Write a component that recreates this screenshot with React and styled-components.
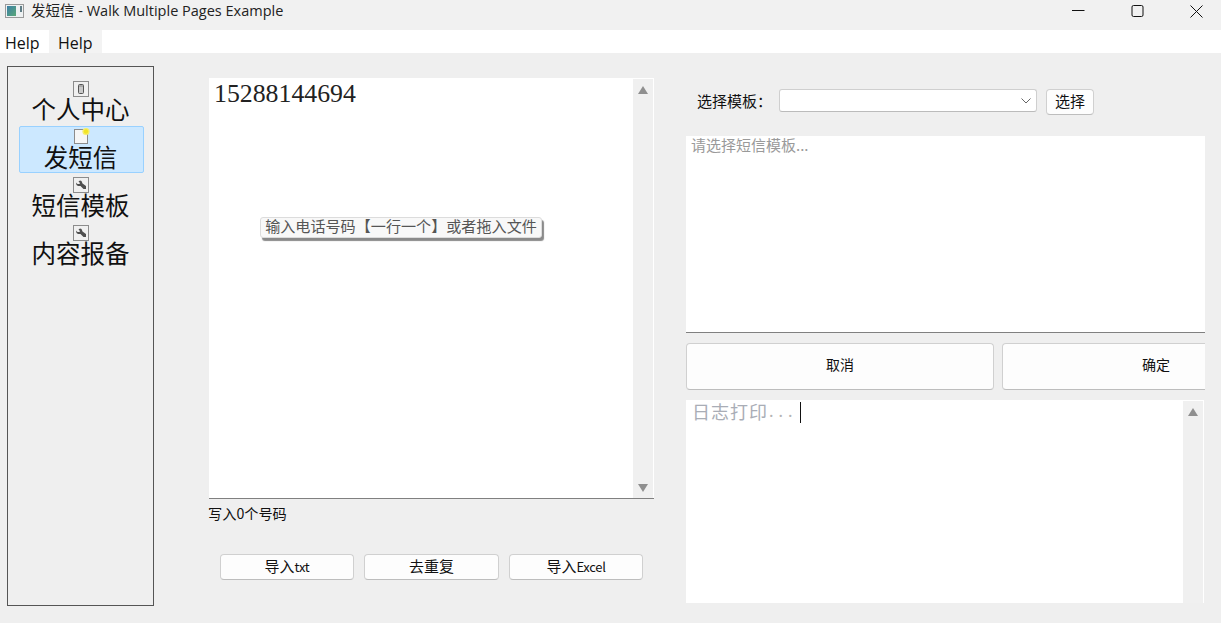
import React from "react";
import styled, { createGlobalStyle } from "styled-components";

const Global = createGlobalStyle`
  html, body { margin: 0; padding: 0; background: #efefef; overflow: hidden; }
  body { font-family: "Noto Sans CJK SC", "Liberation Sans", sans-serif; color: #000; }
`;
const Window = styled.div`width:1221px;height:623px;display:flex;flex-direction:column;overflow:hidden;background:#efefef;`;
const TitleBar = styled.div`height:30px;flex:none;background:#f1f1f1;display:flex;align-items:center;padding-left:5px;`;
const Title = styled.div`margin-left:6px;margin-top:-8px;font:14.5px/20px "Open Sans","Noto Sans CJK SC",sans-serif;color:#222;flex:1;white-space:nowrap;`;
const WinIcon = styled.svg`width:20px;height:16px;margin-top:-8px;flex:none;`;
const Controls = styled.div`display:flex;margin-top:-7px;margin-right:18px;gap:46px;`;
const Ctl = styled.svg`width:13px;height:13px;display:block;`;
const MenuBar = styled.div`height:23px;flex:none;background:#fff;display:flex;`;
const MenuItem = styled.div`width:${p=>p.$hi?"53px":"48px"};padding-left:${p=>p.$hi?"9px":"5px"};box-sizing:border-box;margin-left:${p=>p.$hi?"1px":"0"};background:${p=>p.$hi?"#f3f3f3":"transparent"};font:16px/26px "Open Sans",sans-serif;color:#111;`;
const Body = styled.div`flex:1;display:flex;align-items:flex-start;padding:13px 0 0 7px;`;
const Nav = styled.nav`width:147px;height:540px;box-sizing:border-box;border:1px solid #555;padding:11px 9px 0 11px;flex:none;display:flex;flex-direction:column;`;
const NavItem = styled.div`height:47px;margin-bottom:1px;box-sizing:border-box;display:flex;flex-direction:column;align-items:center;justify-content:flex-start;padding:2px 2px 0 0;border:1px solid ${p=>p.$on?"#99d1ff":"transparent"};border-radius:2px;background:${p=>p.$on?"#cce8ff":"transparent"};`;
const NavIcon = styled.svg`width:16px;height:16px;flex:none;display:block;overflow:visible;`;
const NavLabel = styled.div`font-size:24.5px;line-height:26px;margin-top:-1px;color:#111;white-space:nowrap;`;
const Middle = styled.div`width:445px;margin-left:55px;margin-top:12px;flex:none;position:relative;display:flex;flex-direction:column;`;
const Numbers = styled.div`height:420px;background:#fff;border-bottom:1px solid #808080;display:flex;`;
const NumberText = styled.div`flex:1;padding:1px 5px 0 5px;font:25.8px/29px "Liberation Serif",serif;color:#222;`;
const Bar = styled.div`width:${p=>p.$w||20}px;flex:none;background:#f0f0f0;display:flex;flex-direction:column;justify-content:space-between;align-items:center;padding:7px 1px 6px 0;margin-top:1px;box-sizing:border-box;`;
const NumberEdge = styled.div`width:1px;flex:none;background:#fff;`;
const Arrow = styled.div`width:0;height:0;border-left:5px solid transparent;border-right:5px solid transparent;${p=>p.$down?"border-top:8px solid #8f8f8f;":"border-bottom:8px solid #8f8f8f;"}`;
const Tip = styled.div`position:absolute;left:51px;top:139px;width:282px;height:21px;box-sizing:border-box;border:1px solid #dcdcdc;border-radius:3px;background:#f8f8f8;box-shadow:2px 3px 1px #8a8a8a;font-size:15.1px;line-height:14px;color:#555;text-align:center;white-space:nowrap;`;
const Count = styled.div`font-size:14.2px;line-height:20px;margin-top:4px;margin-left:-1px;margin-bottom:1px;color:#111;`;
const ButtonRow = styled.div`display:flex;gap:10px;padding-left:11px;margin-top:30px;`;
const Btn = styled.div`width:${p=>p.$w}px;height:${p=>p.$h||26}px;flex:none;box-sizing:border-box;border:1px solid #d0d0d0;border-bottom-color:#bdbdbd;border-radius:4px;background:#fdfdfd;display:flex;align-items:center;justify-content:center;font-size:${p=>p.$fs||15}px;color:#111;padding-bottom:${p=>p.$pb||3}px;`;
const Latin = styled.span`font-size:13px;letter-spacing:-.3px;margin-top:1px;`;
const Right = styled.div`width:519px;margin-left:32px;flex:none;overflow:hidden;display:flex;flex-direction:column;padding-top:23px;height:537px;`;
const PickRow = styled.div`display:flex;align-items:flex-start;height:47px;`;
const PickLabel = styled.div`width:93px;padding-left:11px;box-sizing:border-box;font-size:15px;line-height:24px;color:#111;white-space:nowrap;`;
const Select = styled.div`width:258px;height:23px;box-sizing:border-box;border:1px solid #cfcfcf;border-bottom-color:#bbb;border-radius:3px;background:#fff;display:flex;justify-content:flex-end;align-items:center;padding-right:5px;`;
const Chevron = styled.svg`width:10px;height:6px;`;
const PickButton = styled(Btn)`margin-left:9px;`;
const TemplateBox = styled.div`height:196px;background:#fff;border-bottom:1px solid #808080;padding:0 5px;font-size:15px;line-height:18px;color:#9a9a9a;`;
const BigRow = styled.div`display:flex;gap:8px;margin-top:10px;`;
const LogBox = styled.div`height:203px;margin:10px 1px 0 0;background:#fff;display:flex;padding-right:1px;`;
const LogText = styled.div`flex:1;padding:0 6px;font-size:18px;line-height:23px;color:#a9adb6;display:flex;align-items:flex-start;letter-spacing:1px;`;
const Dots = styled.span`letter-spacing:5px;color:#b4b4b4;font-family:"Liberation Serif",serif;margin-left:1px;`;
const Caret = styled.span`display:inline-block;width:1px;height:21px;background:#111;margin:2px 0 0 2px;`;

const Frame = () => <rect x=".5" y=".5" width="15" height="15" fill="#f0f0f0" stroke="#8c8c8c" />;
const Mobile = () => (
  <NavIcon viewBox="0 0 16 16"><Frame /><rect x="5.5" y="3.5" width="5" height="9" rx="1" fill="#c9c9c9" stroke="#555" /><path d="M6 5h4" stroke="#888" /></NavIcon>
);
const Note = () => (
  <NavIcon viewBox="0 0 16 16"><rect x="1.5" y=".5" width="13" height="14" fill="#f6f6f6" stroke="#8c8c8c" /><circle cx="13" cy="2.5" r="3.6" fill="#f6ee6a" /><circle cx="13" cy="2.5" r="2.2" fill="#f2e425" /></NavIcon>
);
const Wrench = () => (
  <NavIcon viewBox="0 0 16 16"><Frame /><path d="M3 5.5 4.5 7 6.5 7 7 6 5.5 4.5 7 3.5 8.5 4 9.5 6.5 13 9 13 12 10.5 12 7.5 9 5 9 3.5 8Z" fill="#4f4f4f" /></NavIcon>
);

export default function App() {
  return (
    <Window>
      <Global />
      <TitleBar>
        <WinIcon viewBox="0 0 20 16">
          <defs><linearGradient id="g" x1="0" y1="0" x2="1" y2="1"><stop offset="0" stopColor="#3b7fa6" /><stop offset="1" stopColor="#5aa878" /></linearGradient></defs>
          <rect x=".5" y="1.5" width="18" height="13" fill="#eef1f2" stroke="#9a9a9a" />
          <rect x="2" y="3" width="9" height="10" fill="url(#g)" />
          <rect x="15" y="3" width="2" height="6" fill="#5f7d86" />
        </WinIcon>
        <Title>发短信 - Walk Multiple Pages Example</Title>
        <Controls>
          <Ctl viewBox="0 0 13 13"><path d="M0 5.5h12.5" stroke="#111" strokeWidth="1" /></Ctl>
          <Ctl viewBox="0 0 13 13"><rect x="1" y=".5" width="11" height="11" rx="1.5" fill="none" stroke="#111" /></Ctl>
          <Ctl viewBox="0 0 13 13"><path d="M.5.5l12 12M12.5.5l-12 12" stroke="#111" fill="none" /></Ctl>
        </Controls>
      </TitleBar>
      <MenuBar>
        <MenuItem>Help</MenuItem>
        <MenuItem $hi>Help</MenuItem>
      </MenuBar>
      <Body>
        <Nav>
          <NavItem><Mobile /><NavLabel>个人中心</NavLabel></NavItem>
          <NavItem $on><Note /><NavLabel>发短信</NavLabel></NavItem>
          <NavItem><Wrench /><NavLabel>短信模板</NavLabel></NavItem>
          <NavItem><Wrench /><NavLabel>内容报备</NavLabel></NavItem>
        </Nav>
        <Middle>
          <Numbers>
            <NumberText>15288144694</NumberText>
            <Bar><Arrow /><Arrow $down /></Bar>
            <NumberEdge />
          </Numbers>
          <Tip>输入电话号码【一行一个】或者拖入文件</Tip>
          <Count>写入0个号码</Count>
          <ButtonRow>
            <Btn $w={134}>导入<Latin>txt</Latin></Btn>
            <Btn $w={135}>去重复</Btn>
            <Btn $w={134}>导入<Latin>Excel</Latin></Btn>
          </ButtonRow>
        </Middle>
        <Right>
          <PickRow>
            <PickLabel>选择模板：</PickLabel>
            <Select><Chevron viewBox="0 0 10 6"><path d="M.5.5 5 5 9.5.5" fill="none" stroke="#666" /></Chevron></Select>
            <PickButton $w={48}>选择</PickButton>
          </PickRow>
          <TemplateBox>请选择短信模板...</TemplateBox>
          <BigRow>
            <Btn $w={308} $h={47} $fs={14} $pb={5}>取消</Btn>
            <Btn $w={308} $h={47} $fs={14} $pb={5}>确定</Btn>
          </BigRow>
          <LogBox>
            <LogText>日志打印<Dots>...</Dots><Caret /></LogText>
            <Bar><Arrow /></Bar>
          </LogBox>
        </Right>
      </Body>
    </Window>
  );
}
